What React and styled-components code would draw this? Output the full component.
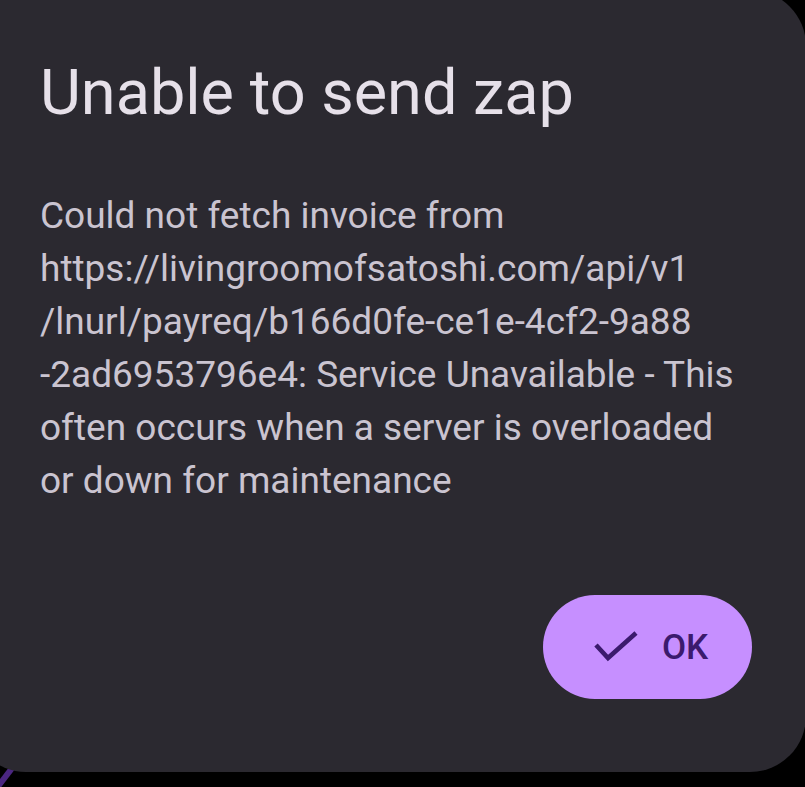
import React from 'react'
import styled, { createGlobalStyle } from 'styled-components'

const GlobalStyle = createGlobalStyle`
  html, body {
    margin: 0;
    padding: 0;
    background: #000;
  }
  body {
    width: 805px;
    height: 787px;
    overflow: hidden;
    font-family: Roboto, "Noto Sans", sans-serif;
  }
`

const Screen = styled.div`
  position: relative;
  width: 805px;
  height: 787px;
  overflow: hidden;
  background: #000;
`

const Backdrop = styled.svg`
  position: absolute;
  left: 0;
  bottom: 0;
`

const Dialog = styled.div`
  position: absolute;
  left: -30px;
  top: -10px;
  width: 836px;
  height: 782px;
  box-sizing: border-box;
  background: #2b2930;
  border-radius: 56px;
  padding: 63px 54px 0 70px;
  display: flex;
  flex-direction: column;
`

const Title = styled.h1`
  margin: 0;
  font-size: 63px;
  font-weight: 400;
  line-height: 80px;
  color: #e6e0e9;
`

const Body = styled.p`
  margin: 56px 0 0;
  font-size: 37px;
  line-height: 53px;
  color: #cac4d0;
  white-space: nowrap;
`

const Actions = styled.div`
  margin-top: auto;
  margin-bottom: 73px;
  display: flex;
  justify-content: flex-end;
`

const OkButton = styled.button`
  display: flex;
  align-items: center;
  gap: 24px;
  width: 209px;
  height: 104px;
  padding: 0 0 0 51px;
  box-sizing: border-box;
  border: none;
  border-radius: 52px;
  background: #c68fff;
  color: #3b1a6d;
  font-family: Roboto, sans-serif;
  font-size: 35px;
  font-weight: 500;
`

const Check = () => (
  <svg width="44" height="34" viewBox="0 0 44 34" fill="none">
    <path d="M2 15 L14 28 L42 3" stroke="#3b1a6d" strokeWidth="4.6" />
  </svg>
)

const lines = [
  'Could not fetch invoice from',
  'https://livingroomofsatoshi.com/api/v1',
  '/lnurl/payreq/b166d0fe-ce1e-4cf2-9a88',
  '-2ad6953796e4: Service Unavailable - This',
  'often occurs when a server is overloaded',
  'or down for maintenance',
]

export default function App() {
  return (
    <Screen>
      <GlobalStyle />
      <Backdrop width="40" height="40" viewBox="0 0 40 40">
        <path d="M-4 42 L16 16" stroke="#4a2680" strokeWidth="6" />
      </Backdrop>
      <Dialog>
        <Title>Unable to send zap</Title>
        <Body>
          {lines.map((line, i) => (
            <React.Fragment key={i}>
              {line}
              {i < lines.length - 1 && <br />}
            </React.Fragment>
          ))}
        </Body>
        <Actions>
          <OkButton>
            <Check />
            OK
          </OkButton>
        </Actions>
      </Dialog>
    </Screen>
  )
}
